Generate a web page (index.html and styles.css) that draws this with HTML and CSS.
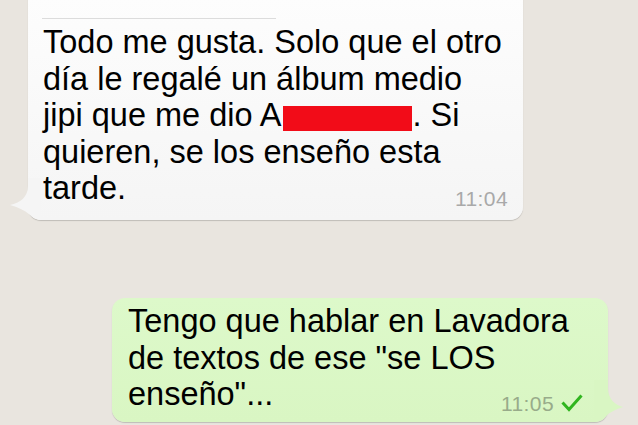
FILE: index.html
```html
<!DOCTYPE html>
<html lang="es">
<head>
<meta charset="utf-8">
<title>Chat</title>
<link rel="stylesheet" href="styles.css">
</head>
<body>
<div class="chat">
  <div class="bubble bubble-in">
    <svg class="tail tail-in" width="40" height="42" viewBox="0 0 40 42"><path d="M20 0 L20 8 C20 19 12 25 2 27 C10 29 16 32 22 37 C25 40 28 41 33 42 L33 0 Z" fill="#f5f5f5"/></svg>
    <div class="divider"></div>
    <div class="msg-text">Todo me gusta. Solo que el otro<br>día le regalé un álbum medio<br>jipi que me dio A<span class="redact"></span>. Si<br>quieren, se los enseño esta<br>tarde.</div>
    <div class="meta"><span class="time">11:04</span></div>
  </div>
  <div class="bubble bubble-out">
    <svg class="tail tail-out" width="40" height="42" viewBox="0 0 40 42"><path d="M23 0 L23 8 C23 19 30 25 38 27 C31 29 25 32 20 37 C17 40 14 41 9 42 L9 0 Z" fill="#d9f6c3"/></svg>
    <div class="msg-text">Tengo que hablar en Lavadora<br>de textos de ese "se LOS<br>enseño"...</div>
    <div class="meta"><span class="time">11:05</span><svg class="check" width="22" height="18" viewBox="0 0 22 18"><path d="M1.5 8.5 L8 15.5 L20.5 1.5" fill="none" stroke="#30b51f" stroke-width="3"/></svg></div>
  </div>
</div>
</body>
</html>
```
FILE: styles.css
```css
html, body {
  margin: 0;
  padding: 0;
}
body {
  width: 638px;
  height: 425px;
  overflow: hidden;
  background: #e9e5df;
  font-family: "Liberation Sans", Arial, Helvetica, sans-serif;
  color: #000;
}
.chat {
  display: flex;
  flex-direction: column;
}
.bubble {
  position: relative;
  box-sizing: border-box;
  border-radius: 13px;
  box-shadow: 0 1px 1px rgba(0, 0, 0, 0.18);
}
.bubble-in {
  align-self: flex-start;
  margin-left: 28px;
  margin-top: -30px;
  width: 495px;
  padding: 48px 15px 10.5px 15px;
  background: linear-gradient(#fefefe, #f5f5f5);
}
.bubble-out {
  align-self: flex-end;
  margin-right: 30px;
  margin-top: 78px;
  width: 496px;
  padding: 5px 25px 7.5px 16px;
  background: linear-gradient(#ddf9ca, #d9f6c3);
}
.divider {
  width: 234px;
  height: 1px;
  margin-left: -1px;
  margin-bottom: 5px;
  background: #dcdcdc;
}
.msg-text {
  position: relative;
  font-size: 32.5px;
  line-height: 36.6px;
  white-space: nowrap;
}
.redact {
  display: inline-block;
  width: 129px;
  height: 25px;
  margin-left: 2px;
  vertical-align: -4.5px;
  background: #f20c18;
}
.meta {
  position: relative;
  display: flex;
  justify-content: flex-end;
  align-items: center;
  gap: 7px;
  height: 20px;
  font-size: 21px;
  line-height: 20px;
  letter-spacing: 0.4px;
}
.bubble-in .meta {
  margin-top: -17.5px;
}
.bubble-out .meta {
  margin-top: -18.3px;
}
.bubble-in .time {
  color: #a9a9a9;
}
.bubble-out .time {
  color: #98ab8a;
}
.check {
  display: block;
  margin-top: -2px;
}
.tail {
  position: absolute;
  bottom: 0;
}
.tail-in {
  left: -20px;
}
.tail-out {
  right: -17px;
}
```
